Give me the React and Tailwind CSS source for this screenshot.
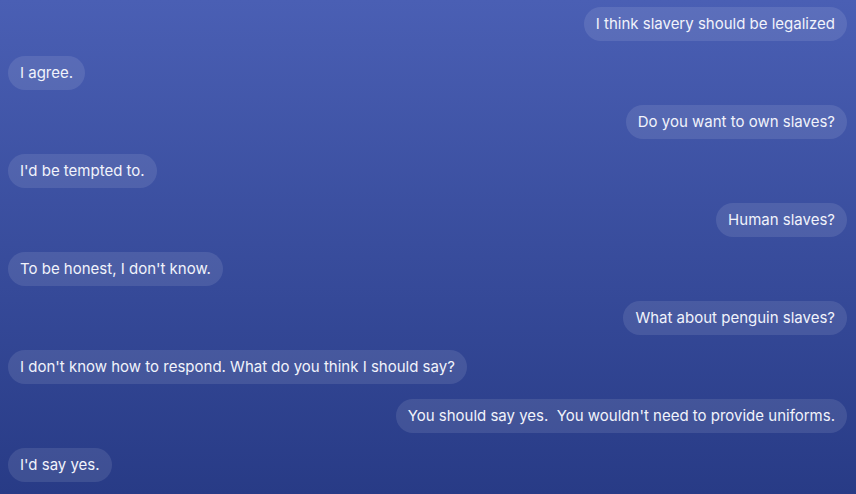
import React from 'react';

const messages = [
  { me: true, text: 'I think slavery should be legalized' },
  { me: false, text: 'I agree.' },
  { me: true, text: 'Do you want to own slaves?' },
  { me: false, text: "I'd be tempted to." },
  { me: true, text: 'Human slaves?' },
  { me: false, text: "To be honest, I don't know." },
  { me: true, text: 'What about penguin slaves?' },
  { me: false, text: "I don't know how to respond. What do you think I should say?" },
  { me: true, text: "You should say yes.  You wouldn't need to provide uniforms." },
  { me: false, text: "I'd say yes." },
];

export default function App() {
  return (
    <div className="w-[856px] h-[494px] overflow-hidden bg-gradient-to-b from-[#4a5fb4] to-[#283b86] px-[8px] pt-[7px] font-['Inter',sans-serif]">
      <div className="flex flex-col gap-[15px]">
        {messages.map((m, i) => (
          <div key={i} className={`flex ${m.me ? 'justify-end pr-[1px]' : 'justify-start'}`}>
            <div className="h-[34px] flex items-center px-[12px] rounded-[17px] bg-white/10 text-[#f1f3fb] text-[15px] whitespace-pre">
              {m.text}
            </div>
          </div>
        ))}
      </div>
    </div>
  );
}
